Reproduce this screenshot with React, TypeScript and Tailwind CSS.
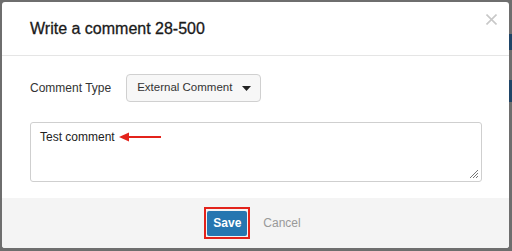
export default function App() {
    return (
        <div className="w-[512px] h-[251px] bg-[#6e6e6e] p-[2px] pb-[3px] pr-[3px] font-['Liberation_Sans',Arial,sans-serif] relative overflow-hidden">
            {/* page bits peeking out behind the modal */}
            <div className="absolute right-0 top-[34px] w-[3px] h-[16px] bg-[#1f4466]" />
            <div className="absolute right-0 top-[80px] w-[3px] h-[22px] bg-[#1f4466]" />

            <div className="relative w-full h-full bg-white rounded-[3px] flex flex-col overflow-hidden">
                {/* HEADER */}
                <div className="h-[54px] shrink-0 border-b border-[#e5e5e5] flex items-center px-[28px] relative">
                    <h2 className="text-[16px] font-normal text-[#1a1a1a] [-webkit-text-stroke:0.3px_#1a1a1a]">Write a comment 28-500</h2>
                    <svg width="11" height="11" viewBox="0 0 11 11" className="absolute right-[12px] top-[12px]">
                        <path d="M0.5 0.5 L10.5 10.5 M10.5 0.5 L0.5 10.5" stroke="#c8c8c8" strokeWidth="1.6" />
                    </svg>
                </div>

                {/* BODY */}
                <div className="flex-1 px-[28px] pt-[18px]">
                    <div className="flex items-center gap-[15px] h-[28px]">
                        <span className="text-[12px] text-[#333]">Comment Type</span>
                        <div className="h-[28px] pl-[10px] pr-[9px] flex items-center gap-[10px] bg-[#f7f7f7] border border-[#d0d0d0] rounded-[4px] text-[11.5px] text-[#333] whitespace-nowrap">
                            External Comment
                            <svg width="9" height="5" viewBox="0 0 9 5"><path d="M0 0h9L4.5 5z" fill="#222" /></svg>
                        </div>
                    </div>

                    <div className="mt-[20px] w-[452px] h-[60px] border border-[#cfcfcf] rounded-[3px] px-[9px] pt-[5px] relative">
                        <div className="flex items-center gap-[4px] text-[12px] text-[#222]">
                            Test comment
                            <svg width="42" height="10" viewBox="0 0 42 10">
                                <path d="M0 5 L10 0.5 L10 9.5 Z" fill="#e3231b" />
                                <path d="M9 5 H42" stroke="#e3231b" strokeWidth="2" />
                            </svg>
                        </div>
                        <svg width="10" height="10" viewBox="0 0 10 10" className="absolute right-[2px] bottom-[2px]">
                            <path d="M9 1 L1 9 M9 4 L4 9 M9 7 L7 9" stroke="#777" strokeWidth="1" />
                        </svg>
                    </div>
                </div>

                {/* FOOTER */}
                <div className="h-[50px] shrink-0 bg-[#f4f4f4] flex items-center justify-center gap-[13px] pr-[6px]">
                    <div className="border-2 border-[#e3231b] p-[1px]">
                        <button className="h-[25px] w-[40px] bg-[#2676b0] text-white text-[12px] font-bold rounded-[2px]">Save</button>
                    </div>
                    <button className="text-[12px] text-[#999]">Cancel</button>
                </div>
            </div>
        </div>
    );
}
